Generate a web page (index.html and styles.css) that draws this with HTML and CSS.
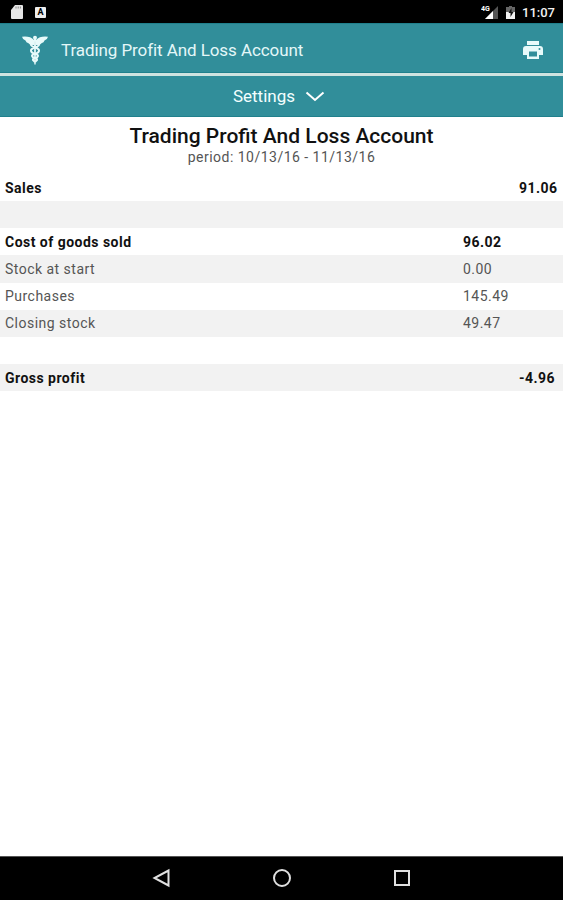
FILE: index.html
```html
<!DOCTYPE html>
<html lang="en">
<head>
  <meta charset="UTF-8" />
  <meta name="viewport" content="width=device-width, initial-scale=1.0"/>
  <title>Trading Profit And Loss Account</title>
  <link rel="stylesheet" href="styles.css">
</head>
<body>
  <div class="status-bar">
    <svg class="sd-icon" width="12" height="14" viewBox="0 0 12 14">
      <path d="M4 0h7a1 1 0 0 1 1 1v12a1 1 0 0 1-1 1H1a1 1 0 0 1-1-1V5z" fill="#e6e6e6"/>
      <path d="M5 1.5v2M7.2 1.5v2M9.4 1.5v2" stroke="#888" stroke-width="1"/>
    </svg>
    <span class="app-badge">A</span>
    <div class="status-right">
      <svg width="18" height="14" viewBox="0 0 18 14">
        <path d="M17 1v13H4z" fill="#555"/>
        <path d="M12 6v8H4z" fill="#fff"/>
        <text class="network" x="0" y="6">4G</text>
      </svg>
      <svg class="battery" width="9" height="13" viewBox="0 0 9 13">
        <path d="M3 0h3v1h3v12H0V1h3z" fill="#666"/>
        <path d="M0 6h9v7H0z" fill="#f2f2f2"/>
        <path d="M5.5 2L2.5 7h2v4l3-5h-2z" fill="#111"/>
      </svg>
      <span class="clock">11:07</span>
    </div>
  </div>

  <header class="app-bar">
    <svg class="logo" width="26" height="30" viewBox="0 0 26 30">
      <g fill="#e8fafa">
        <circle cx="13" cy="2.7" r="2"/>
        <path d="M12 5Q8 0.800 0 1.800Q.8 5 3.500 5.500Q4 7.800 6.500 8.200Q8 10.500 12 10zM14 5Q18 .8 26 1.800Q25.200 5 22.500 5.500Q22 7.800 19.500 8.200Q18 10.500 14 10z"/>
        <path d="M12 4h2l-.3 25.500h-1.400z"/>
      </g>
      <path d="M9 9C8 13 18 12 17 16S9.500 18 10 21S15.500 22 15 25L13 27M17 9C18 13 8 12 9 16S16.500 18 16 21S10.500 22 11 25L13 27" fill="none" stroke="#e8fafa" stroke-width="2"/>
    </svg>
    <span class="app-title">Trading Profit And Loss Account</span>
    <svg class="print" width="20" height="18" viewBox="0 0 20 18">
      <path d="M4 0h12v4H4zM3 5h14a3 3 0 0 1 3 3v6h-4v4H4v-4H0V8a3 3 0 0 1 3-3z" fill="#e8fafa"/>
      <path d="M6 10.500h8v5H6z" fill="#318e9a"/>
      <circle cx="16.500" cy="8" r="1" fill="#318e9a"/>
    </svg>
  </header>

  <div class="settings">
    <span>Settings</span>
    <svg width="20" height="11" viewBox="0 0 20 11">
      <path d="M1.500 1.500L10 9L18.500 1.500" fill="none" stroke="#fff" stroke-width="2"/>
    </svg>
  </div>

  <main class="report">
    <h1>Trading Profit And Loss Account</h1>
    <p class="period">period: 10/13/16 - 11/13/16</p>

    <div class="rows">
      <div class="row total"><span>Sales</span><span></span><span>91.06</span></div>
      <div class="row"></div>
      <div class="row total"><span>Cost of goods sold</span><span>96.02</span></div>
      <div class="row"><span>Stock at start</span><span>0.00</span></div>
      <div class="row"><span>Purchases</span><span>145.49</span></div>
      <div class="row"><span>Closing stock</span><span>49.47</span></div>
      <div class="row"></div>
      <div class="row total"><span>Gross profit</span><span></span><span>-4.96</span></div>
    </div>
  </main>

  <nav class="nav-bar">
    <svg width="20" height="20" viewBox="0 0 20 20"><path d="M16.500 2.500v15L2.500 10z"/></svg>
    <svg width="20" height="20" viewBox="0 0 20 20"><circle cx="10" cy="10" r="8"/></svg>
    <svg width="20" height="20" viewBox="0 0 20 20"><path d="M3 3h14v14H3z"/></svg>
  </nav>
</body>
</html>
```
FILE: styles.css
```css
:root {
  --teal: #318e9a;
  --teal-dark: #20808c;
  --stripe: #f2f2f2;
}

* {
  box-sizing: border-box;
}

body {
  margin: 0;
  height: 100vh;
  display: flex;
  flex-direction: column;
  overflow: hidden;
  background: #fff;
  font-family: Roboto, sans-serif;
}

svg {
  display: block;
  flex: none;
}

.status-bar {
  height: 23px;
  flex: none;
  display: flex;
  align-items: center;
  padding: 1px 8px 0 11px;
  background: #000;
  color: #f2f2f2;
}

.app-badge {
  width: 11px;
  height: 11px;
  margin-left: 12px;
  border-radius: 1px;
  background: #eee;
  color: #000;
  font-size: 9px;
  font-weight: 700;
  line-height: 11px;
  text-align: center;
}

.status-right {
  margin-left: auto;
  display: flex;
  align-items: center;
}

.network {
  font-size: 7px;
  font-weight: 700;
  fill: #fff;
}

.battery {
  margin: 0 7px 0 7px;
}

.clock {
  width: 33px;
  font-size: 13px;
  font-weight: 500;
  white-space: nowrap;
}

.app-bar {
  height: 50px;
  flex: none;
  display: flex;
  align-items: center;
  padding: 3px 20px 0 22px;
  background: var(--teal);
  border-top: 1px solid var(--teal-dark);
  border-bottom: 1px solid var(--teal-dark);
  color: #e4f7f8;
}

.app-title {
  margin-left: 13px;
  font-size: 17px;
  letter-spacing: -0.08px;
}

.print {
  margin-left: auto;
}

.settings {
  height: 44px;
  flex: none;
  display: flex;
  align-items: center;
  justify-content: center;
  gap: 10px;
  padding-right: 5px;
  background: var(--teal);
  border-top: 3px solid #cfe3e0;
  border-bottom: 1px solid var(--teal-dark);
  color: #f4ffff;
  font-size: 17px;
}

.report {
  flex: 1;
}

h1 {
  margin: 7px 0 0;
  font-size: 21px;
  font-weight: 500;
  line-height: 25px;
  text-align: center;
  color: #111;
}

.period {
  margin: 0;
  font-size: 14px;
  letter-spacing: 0.48px;
  line-height: 17px;
  text-align: center;
  color: #555;
}

.rows {
  margin-top: 8px;
}

.row {
  height: 27.15px;
  display: grid;
  grid-template-columns: 458px 56px 1fr;
  align-items: center;
  padding-left: 5px;
  font-size: 14px;
  letter-spacing: 0.48px;
  color: #555;
}

.row:nth-child(even) {
  background: var(--stripe);
}

.total {
  font-weight: 700;
  color: #111;
}

.nav-bar {
  height: 44px;
  flex: none;
  display: flex;
  align-items: center;
  justify-content: center;
  gap: 100px;
  padding-bottom: 2px;
  background: #000;
  border-top: 1px solid #555;
}

.nav-bar svg {
  fill: none;
  stroke: #e0e0e0;
  stroke-width: 2;
}
```
